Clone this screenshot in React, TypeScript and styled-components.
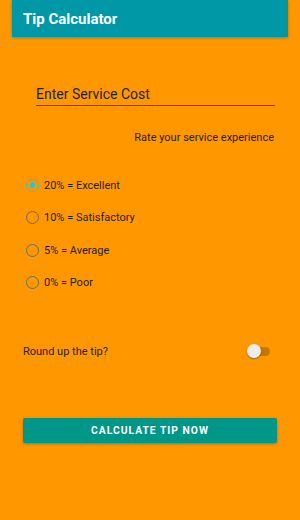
import React, { useState } from "react";
import styled, { createGlobalStyle } from "styled-components";

const GlobalStyle = createGlobalStyle`
  html, body {
    margin: 0;
    padding: 0;
    background: #ff9800;
  }
  body {
    font-family: Roboto, "Liberation Sans", sans-serif;
  }
`;

const Screen = styled.div`
  width: 300px;
  height: 520px;
  background: #ff9800;
  display: flex;
  flex-direction: column;
  overflow: hidden;
`;

const AppBar = styled.header`
  margin: 0 12px;
  height: 37px;
  background: #0097a7;
  display: flex;
  align-items: center;
  padding-left: 11px;
  box-shadow: 0 1px 3px rgba(0, 0, 0, 0.25);
  color: #ffffff;
  font-size: 15px;
  font-weight: 700;
`;

const Field = styled.label`
  margin: 47px 25px 0 36px;
  display: block;
  border-bottom: 1px solid rgba(0, 0, 0, 0.55);
  padding-bottom: 2px;
`;

const FieldInput = styled.input`
  width: 100%;
  border: none;
  background: transparent;
  outline: none;
  padding: 0;
  font-family: Roboto, "Liberation Sans", sans-serif;
  font-size: 14px;
  line-height: 16px;
  color: #222222;

  &::placeholder {
    color: #222222;
  }
`;

const Hint = styled.div`
  margin: 25px 26px 0 0;
  text-align: right;
  font-size: 11px;
  color: #1e1e1e;
`;

const RadioGroup = styled.div`
  margin: 34px 0 0 26px;
  display: flex;
  flex-direction: column;
  gap: 18.5px;
`;

const RadioRow = styled.label`
  display: flex;
  align-items: center;
  gap: 5px;
  height: 14px;
  font-size: 11px;
  color: #1e1e1e;
  cursor: pointer;
`;

const RadioCircle = styled.span<{ $on: boolean }>`
  width: 13px;
  height: 13px;
  box-sizing: border-box;
  border-radius: 50%;
  border: 1.7px solid ${(p) => (p.$on ? "#26c6da" : "#6b6b6b")};
  display: flex;
  align-items: center;
  justify-content: center;

  &::after {
    content: "";
    width: 5.5px;
    height: 5.5px;
    border-radius: 50%;
    background: ${(p) => (p.$on ? "#26c6da" : "transparent")};
  }
`;

const SwitchRow = styled.div`
  margin: 54px 30px 0 23px;
  display: flex;
  align-items: center;
  justify-content: space-between;
  font-size: 11px;
  color: #1e1e1e;
  height: 16px;
`;

const Track = styled.button`
  position: relative;
  width: 20px;
  height: 9px;
  border: none;
  padding: 0;
  border-radius: 5px;
  background: rgba(0, 0, 0, 0.22);
  cursor: pointer;
`;

const Thumb = styled.span<{ $on: boolean }>`
  position: absolute;
  top: -3px;
  left: ${(p) => (p.$on ? "9px" : "-3px")};
  width: 14px;
  height: 14px;
  border-radius: 50%;
  background: #ececec;
  box-shadow: 0 1px 2px rgba(0, 0, 0, 0.35);
`;

const CalcButton = styled.button`
  margin: 58px 23px 0 23px;
  height: 25px;
  border: none;
  border-radius: 2px;
  background: #009688;
  color: #ffffff;
  font-family: Roboto, "Liberation Sans", sans-serif;
  font-size: 10.3px;
  font-weight: 700;
  letter-spacing: 1px;
  box-shadow: 0 1px 3px rgba(0, 0, 0, 0.3);
  cursor: pointer;
`;

const options = [
  "20% = Excellent",
  "10% = Satisfactory",
  "5% = Average",
  "0% = Poor",
];

export default function App() {
  const [choice, setChoice] = useState(0);
  const [roundUp, setRoundUp] = useState(false);

  return (
    <Screen>
      <GlobalStyle />
      <AppBar>Tip Calculator</AppBar>
      <Field>
        <FieldInput placeholder="Enter Service Cost" />
      </Field>
      <Hint>Rate your service experience</Hint>
      <RadioGroup>
        {options.map((label, idx) => (
          <RadioRow key={label} onClick={() => setChoice(idx)}>
            <RadioCircle $on={choice === idx} />
            {label}
          </RadioRow>
        ))}
      </RadioGroup>
      <SwitchRow>
        Round up the tip?
        <Track onClick={() => setRoundUp(!roundUp)}>
          <Thumb $on={roundUp} />
        </Track>
      </SwitchRow>
      <CalcButton>CALCULATE TIP NOW</CalcButton>
    </Screen>
  );
}
